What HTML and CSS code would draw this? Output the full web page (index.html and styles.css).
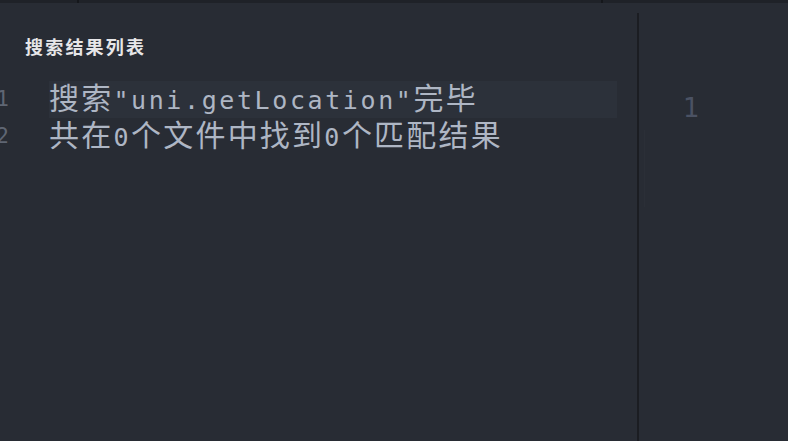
FILE: index.html
```html
<!DOCTYPE html>
<html lang="zh">
<head>
<meta charset="utf-8">
<link rel="stylesheet" href="styles.css">
</head>
<body>
<div class="tabbar">
  <div class="tab tab-first"></div>
  <div class="tab tab-second"></div>
  <div class="tab tab-rest"></div>
</div>
<div class="main">
  <section class="results">
    <h2 class="title">搜索结果列表</h2>
    <div class="code">
      <div class="line active">
        <span class="num">1</span>
        <span class="text"><span class="cjk">搜索</span>"uni.getLocation"<span class="cjk">完毕</span></span>
      </div>
      <div class="line">
        <span class="num">2</span>
        <span class="text"><span class="cjk">共在</span>0<span class="cjk">个文件中找到</span>0<span class="cjk">个匹配结果</span></span>
      </div>
    </div>
  </section>
  <div class="divider"></div>
  <section class="side">
    <div class="side-num">1</div>
    <div class="side-guide"></div>
  </section>
</div>
</body>
</html>
```
FILE: styles.css
```css
html, body {
  margin: 0;
  padding: 0;
  height: 100%;
  background: #282c34;
  overflow: hidden;
}
body {
  font-family: "Noto Sans CJK SC", "Noto Sans", sans-serif;
  display: flex;
  flex-direction: column;
}
.tabbar {
  display: flex;
  height: 3px;
  background: #1f2228;
  flex: none;
}
.tab-first {
  width: 77px;
  border-right: 2px solid #15171b;
}
.tab-second {
  width: 522px;
  border-right: 2px solid #15171b;
}
.tab-rest {
  flex: 1;
}
.main {
  flex: 1;
  display: flex;
}
.results {
  width: 637px;
  flex: none;
}
.title {
  margin: 0;
  padding: 32px 0 0 25px;
  height: 28px;
  font-size: 18px;
  line-height: 22px;
  font-weight: 700;
  color: #e6e6e8;
  letter-spacing: 2.2px;
}
.code {
  margin-top: 18px;
  font-family: "DejaVu Sans Mono", "Noto Sans CJK SC", monospace;
  color: #aeb6c4;
}
.line {
  display: flex;
  height: 37px;
  align-items: center;
}
.num {
  width: 9px;
  display: flex;
  justify-content: flex-end;
  font-size: 21px;
  line-height: 37px;
  color: #5f6673;
  overflow: hidden;
  flex: none;
}
.text {
  margin-left: 40px;
  width: 568px;
  height: 37px;
  line-height: 37px;
  font-size: 25px;
  letter-spacing: 2.6px;
  white-space: nowrap;
}
.line.active .text {
  background: #2c313a;
}
.cjk {
  font-family: "Noto Sans CJK SC", sans-serif;
  font-size: 30px;
  letter-spacing: 2.2px;
  line-height: 1;
}
.divider {
  width: 2px;
  margin-top: 10px;
  background: #1b1d22;
  flex: none;
}
.side {
  flex: 1;
  padding-left: 44px;
  position: relative;
}
.side-num {
  margin-top: 90px;
  font-family: "DejaVu Sans", sans-serif;
  font-size: 26px;
  line-height: 30px;
  color: #4b5263;
}
.side-guide {
  position: absolute;
  left: 5px;
  top: 127px;
  width: 1px;
  height: 77px;
  background: #2b2f37;
}
```
